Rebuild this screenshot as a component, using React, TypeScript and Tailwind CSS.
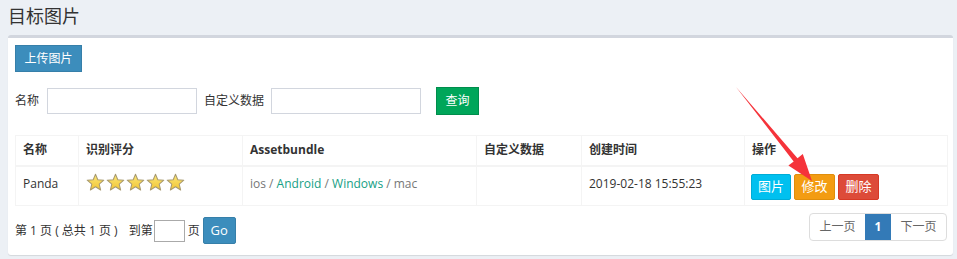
const Star = () => (
  <svg width="19" height="19" viewBox="0 0 24 24">
    <defs>
      <linearGradient id="starFill" x1="0" y1="0" x2="0" y2="1">
        <stop offset="0%" stopColor="#fbe77a" />
        <stop offset="100%" stopColor="#f2c531" />
      </linearGradient>
    </defs>
    <polygon
      points="12,1.5 14.9,8.6 22.5,9.1 16.7,14 18.5,21.5 12,17.4 5.5,21.5 7.3,14 1.5,9.1 9.1,8.6"
      fill="url(#starFill)"
      stroke="#a89a70"
      strokeWidth="1.3"
      strokeLinejoin="round"
    />
  </svg>
);

const cols = ["w-[63px]", "w-[164px]", "w-[234px]", "w-[105px]", "w-[163px]", "w-[203px]"];

export default function App() {
  return (
    <div className="relative w-[957px] h-[259px] overflow-hidden bg-[#ecf0f5] text-[12px] text-[#333] font-['Open_Sans','Noto_Sans_CJK_SC',sans-serif]">
      <h1 className="h-[35px] pl-[8px] pt-[4px] text-[18px] leading-[24px] text-[#333]">目标图片</h1>

      <div className="ml-[8px] w-[945px] h-[220px] bg-white border-t-[3px] border-[#d2d6de] rounded-[3px] shadow-[0_1px_1px_rgba(0,0,0,0.1)] pl-[7px] pr-[5px] pt-[7px]">
        <button className="h-[27px] w-[67px] bg-[#3c8dbc] border border-[#367fa9] text-white text-[12px] leading-none">
          上传图片
        </button>

        <div className="mt-[15px] flex items-center h-[27px]">
          <span className="w-[32px]">名称</span>
          <input className="w-[150px] h-[26px] border border-[#d2d6de] outline-none" />
          <span className="ml-[7px] w-[67px]">自定义数据</span>
          <input className="w-[150px] h-[26px] border border-[#d2d6de] outline-none" />
          <button className="ml-[15px] h-[28px] w-[43px] bg-[#00a65a] border border-[#008d4c] text-white text-[12px] leading-none">
            查询
          </button>
        </div>

        <table className="mt-[21px] w-[932px] border-collapse table-fixed">
          <thead>
            <tr className="h-[30px] border-b-[2px] border-[#f4f4f4]">
              {["名称", "识别评分", "Assetbundle", "自定义数据", "创建时间", "操作"].map((h, i) => (
                <th key={h} className={`${cols[i]} border border-[#f4f4f4] px-[7px] text-left font-bold text-[12px] text-[#333]`}>
                  {h}
                </th>
              ))}
            </tr>
          </thead>
          <tbody>
            <tr className="h-[39px] align-top">
              <td className="border border-[#f4f4f4] px-[7px] pt-[8px]">Panda</td>
              <td className="border border-[#f4f4f4] px-[7px] pt-[6px]">
                <div className="flex gap-[1px]">
                  <Star />
                  <Star />
                  <Star />
                  <Star />
                  <Star />
                </div>
              </td>
              <td className="border border-[#f4f4f4] px-[7px] pt-[8px] text-[#777]">
                ios / <span className="text-[#16a085]">Android</span> /{" "}
                <span className="text-[#16a085]">Windows</span> / mac
              </td>
              <td className="border border-[#f4f4f4] px-[7px] pt-[8px]"></td>
              <td className="border border-[#f4f4f4] px-[7px] pt-[8px]">2019-02-18 15:55:23</td>
              <td className="border border-[#f4f4f4] px-[6px] pt-[7px] pb-[5px]">
                <div className="flex gap-[3px]">
                  <button className="w-[40px] h-[26px] bg-[#00c0ef] border border-[#00acd6] rounded-[2px] text-white text-[13px] leading-none">图片</button>
                  <button className="w-[41px] h-[26px] bg-[#f39c12] border border-[#e08e0b] rounded-[2px] text-white text-[13px] leading-none">修改</button>
                  <button className="w-[41px] h-[26px] bg-[#dd4b39] border border-[#d73925] rounded-[2px] text-white text-[13px] leading-none">删除</button>
                </div>
              </td>
            </tr>
          </tbody>
        </table>

        <div className="mt-[7px] flex items-start justify-between w-[932px]">
          <div className="flex items-center mt-[5px] h-[26px]">
            <span>第 1 页 ( 总共 1 页 )</span>
            <span className="ml-[11px]">到第</span>
            <input className="ml-[1px] w-[31px] h-[22px] border border-[#aaa] outline-none" />
            <span className="ml-[3px]">页</span>
            <button className="ml-[3px] w-[33px] h-[27px] bg-[#3c8dbc] border border-[#367fa9] rounded-[2px] text-white text-[13px] leading-none">
              Go
            </button>
          </div>
          <div className="flex h-[28px] border border-[#ddd] rounded-[4px] overflow-hidden text-[12px]">
            <span className="w-[55px] flex items-center justify-center text-[#666]">上一页</span>
            <span className="w-[26px] flex items-center justify-center bg-[#337ab7] text-white font-bold">1</span>
            <span className="w-[55px] flex items-center justify-center text-[#666]">下一页</span>
          </div>
        </div>
      </div>

      <svg className="absolute left-0 top-0 pointer-events-none" width="957" height="259">
        <polygon
          points="736,87 797.5,158.2 802.8,154.1 812,181 788.4,165.6 793.7,161.4"
          fill="#f5333a"
        />
      </svg>
    </div>
  );
}
